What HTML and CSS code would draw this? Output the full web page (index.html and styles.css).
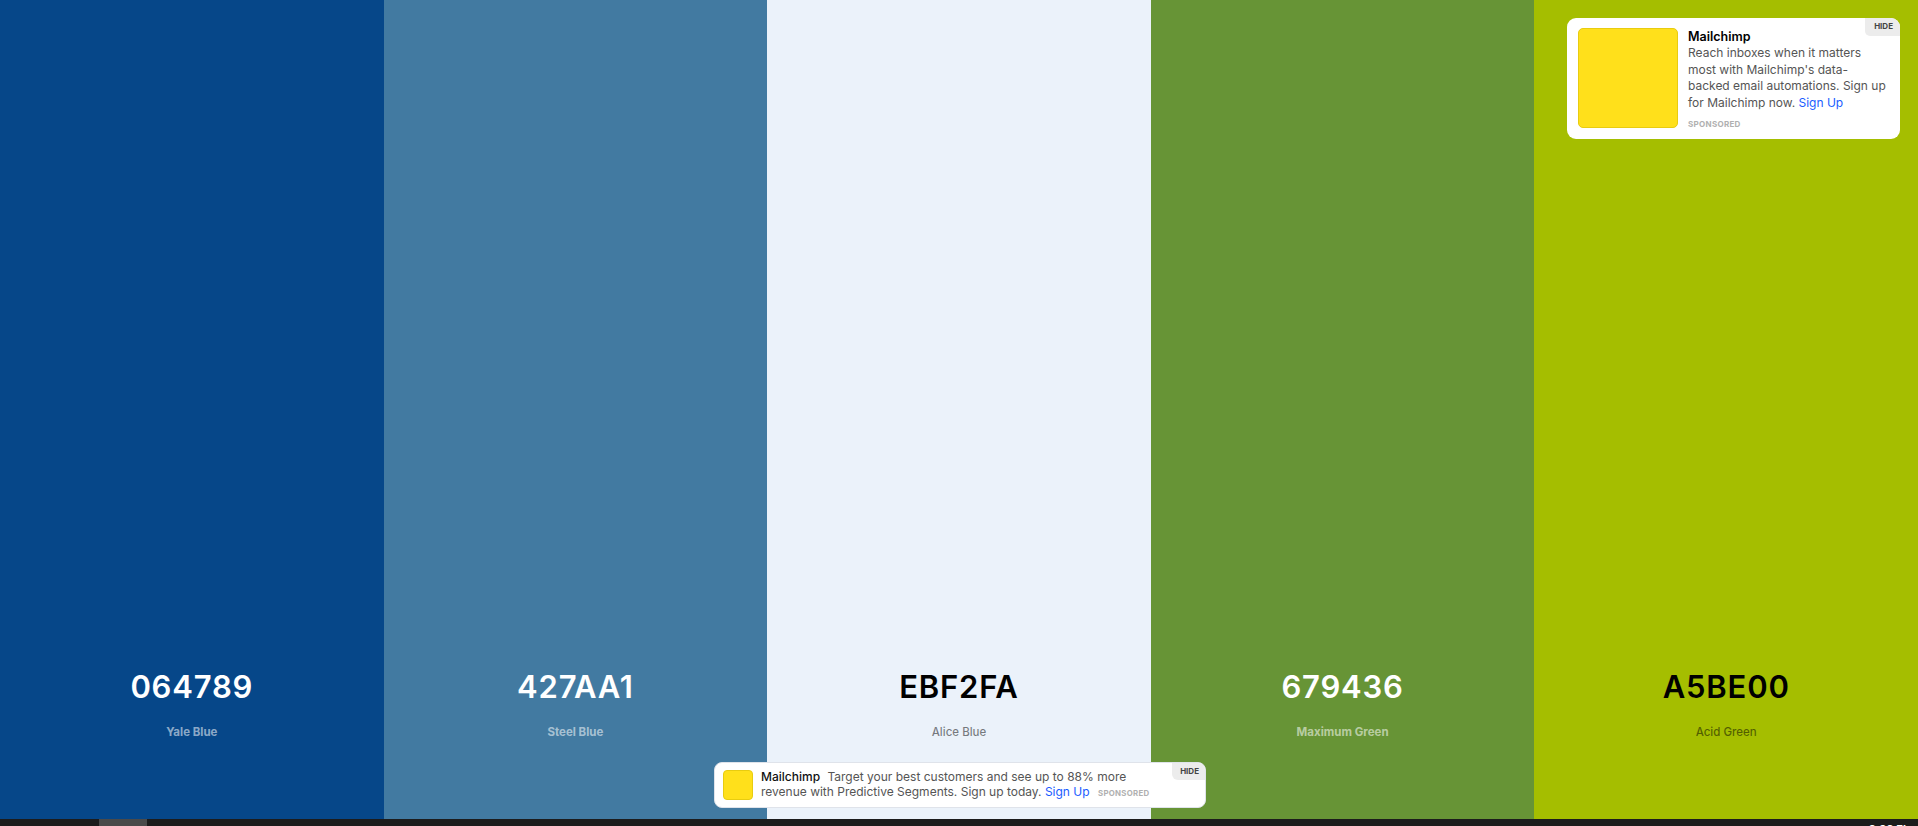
FILE: index.html
```html
<!DOCTYPE html>
<html lang="en">
<head>
<meta charset="utf-8">
<title>Palette</title>
<link rel="stylesheet" href="styles.css">
</head>
<body>
<div class="page">
  <div class="palette">
    <div class="swatch c1"><div class="hex">064789</div><div class="name">Yale Blue</div></div>
    <div class="swatch c2"><div class="hex">427AA1</div><div class="name">Steel Blue</div></div>
    <div class="swatch c3"><div class="hex">EBF2FA</div><div class="name">Alice Blue</div></div>
    <div class="swatch c4"><div class="hex">679436</div><div class="name">Maximum Green</div></div>
    <div class="swatch c5"><div class="hex">A5BE00</div><div class="name">Acid Green</div></div>
  </div>
  <div class="bar">
    <div class="bar-thumb"></div>
    <div class="bar-text">0.00 Eb</div>
  </div>

  <div class="ad-top">
    <div class="ad-img"></div>
    <div class="ad-body">
      <div class="ad-title">Mailchimp</div>
      <div class="ad-desc">Reach inboxes when it matters most with Mailchimp's data-backed email automations. Sign up for Mailchimp now. <a class="ad-link">Sign Up</a></div>
      <div class="ad-sponsored">Sponsored</div>
    </div>
    <div class="hide">HIDE</div>
  </div>

  <div class="ad-bottom">
    <div class="ad-img small"></div>
    <div class="ad-line"><span class="ad-title-inline">Mailchimp</span> Target your best customers and see up to 88% more revenue with Predictive Segments. Sign up today. <a class="ad-link">Sign Up</a> <span class="ad-sponsored inline">Sponsored</span></div>
    <div class="hide">HIDE</div>
  </div>
</div>
</body>
</html>
```
FILE: styles.css
```css
* { box-sizing: border-box; }
html, body { margin: 0; padding: 0; }
body {
  font-family: Inter, "Noto Sans", "Liberation Sans", sans-serif;
  width: 1918px;
  height: 826px;
  overflow: hidden;
}
.page {
  position: relative;
  display: flex;
  flex-direction: column;
  height: 826px;
}
.palette {
  display: flex;
  height: 819px;
}
.swatch {
  flex: 1;
  display: flex;
  flex-direction: column;
  align-items: center;
  justify-content: flex-end;
  padding-bottom: 80px;
  gap: 20px;
}
.hex {
  font-size: 31px;
  line-height: 36px;
  font-weight: 600;
  letter-spacing: 0.8px;
}
.name {
  font-size: 11.5px;
  line-height: 14px;
  font-weight: 700;
}
.c1 { background: #064789; color: #fff; }
.c2 { background: #427AA1; color: #fff; }
.c3 { background: #EBF2FA; color: #000; }
.c4 { background: #679436; color: #fff; }
.c5 { background: #A5BE00; color: #000; }
.c1 .name, .c2 .name, .c4 .name { color: rgba(255,255,255,0.55); }
.c3 .name { color: rgba(0,0,0,0.5); font-weight: 500; }
.c5 .name { color: rgba(0,0,0,0.5); font-weight: 500; }

.bar {
  height: 7px;
  background: #1c1c1c;
  display: flex;
  overflow: hidden;
  position: relative;
}
.bar-thumb {
  margin-left: 99px;
  width: 48px;
  height: 7px;
  background: #4a4a4a;
}
.bar-text {
  margin-left: auto;
  margin-right: 8px;
  color: #fff;
  font-size: 11px;
  font-weight: 700;
  line-height: 11px;
  padding-top: 5px;
}

.ad-top {
  position: absolute;
  top: 18px;
  right: 18px;
  width: 333px;
  height: 121px;
  background: #fff;
  border-radius: 9px;
  display: flex;
  padding: 10px 8px 10px 11px;
  gap: 10px;
  overflow: hidden;
}
.ad-img {
  width: 100px;
  height: 100px;
  flex: none;
  background: #FFE01B;
  border: 1px solid #e8cc10;
  border-radius: 5px;
}
.ad-body {
  display: flex;
  flex-direction: column;
  padding-top: 1px;
}
.ad-title {
  font-size: 12.5px;
  font-weight: 600;
  color: #000;
  line-height: 16px;
}
.ad-desc {
  font-size: 12px;
  line-height: 16.7px;
  color: #555;
  width: 201px;
}
.ad-link { color: #1a5cff; }
.ad-sponsored {
  margin-top: 7px;
  font-size: 8px;
  font-weight: 700;
  text-transform: uppercase;
  letter-spacing: 0.3px;
  color: #b0b0b0;
}
.hide {
  position: absolute;
  top: 0;
  right: 0;
  background: #ececec;
  color: #444;
  font-size: 8px;
  font-weight: 700;
  padding: 3px 7px 4px 9px;
  border-bottom-left-radius: 5px;
  line-height: 11px;
}

.ad-bottom {
  position: absolute;
  left: 714px;
  top: 762px;
  width: 492px;
  height: 46px;
  background: #fff;
  border: 1px solid #dfe3ea;
  border-radius: 8px;
  display: flex;
  align-items: center;
  padding: 0 10px 0 8px;
  gap: 8px;
  overflow: hidden;
}
.ad-img.small {
  width: 30px;
  height: 30px;
  border-radius: 4px;
}
.ad-line {
  font-size: 12px;
  line-height: 14.5px;
  color: #555;
  width: 400px;
}
.ad-title-inline {
  font-weight: 500;
  color: #111;
  margin-right: 4px;
}
.ad-sponsored.inline {
  margin-left: 5px;
  font-size: 7.8px;
}
.ad-bottom .hide {
  border-bottom-left-radius: 6px;
  padding: 3px 6px 3px 8px;
}
```
